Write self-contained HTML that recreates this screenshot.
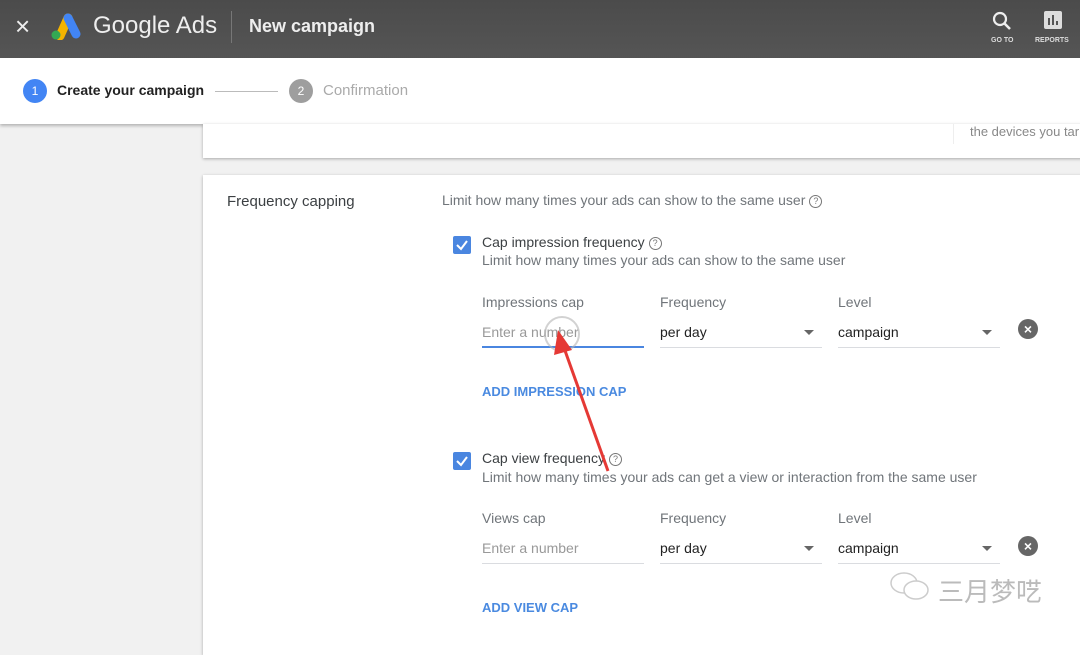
<!DOCTYPE html>
<html><head><meta charset="utf-8"><style>
*{margin:0;padding:0;box-sizing:border-box}
body{width:1080px;height:637px;overflow:hidden;background:#f1f1f1;font-family:"Liberation Sans",Arial,sans-serif;position:relative}
.a{position:absolute}
.hdr{left:0;top:0;width:1080px;height:58px;background:linear-gradient(#4b4b4b,#555)}
.step{left:0;top:58px;width:1080px;height:66px;background:#fff;box-shadow:0 2px 3px rgba(0,0,0,.25)}
.card{background:#fff;box-shadow:0 1px 3px rgba(0,0,0,.3)}
.t{color:#3c4043;font-size:14px}
.g{color:#70757a;font-size:14px}
.lbl{color:#70757a;font-size:14px}
.ul{height:1px;background:#dadce0}
.cb{width:18px;height:18px;background:#4a86e0;border-radius:2px}
.link{color:#4a8ae0;font-size:13px;font-weight:bold}
.x{width:20px;height:20px;border-radius:50%;background:#666;color:#fff;font-size:14px;text-align:center;line-height:20px;font-weight:bold}
.arrow{width:0;height:0;border-left:5px solid transparent;border-right:5px solid transparent;border-top:5px solid #666}
.q{display:inline-block;width:13px;height:13px;border:1.3px solid #777;border-radius:50%;font-size:9px;line-height:11px;text-align:center;color:#777;vertical-align:1px;margin-left:4px}
</style></head><body>
<div class="a hdr"></div>
<div class="a" style="left:15px;top:11px;color:#eee;font-size:26px">×</div>
<svg class="a" style="left:48px;top:12px" width="34" height="28" viewBox="0 0 34 28"><path d="M12 24 L20 6" stroke="#f4b400" stroke-width="9" stroke-linecap="round"/><path d="M20 6 L28 22" stroke="#4285f4" stroke-width="9" stroke-linecap="round"/><circle cx="8" cy="23" r="4.5" fill="#34a853"/></svg>
<div class="a" style="left:93px;top:12px;color:#eee;font-size:24px">Google Ads</div>
<div class="a" style="left:231px;top:11px;width:1px;height:32px;background:#777"></div>
<div class="a" style="left:249px;top:16px;color:#eee;font-size:18px;font-weight:bold">New campaign</div>
<svg class="a" style="left:991px;top:10px" width="22" height="22" viewBox="0 0 22 22"><circle cx="9" cy="9" r="6" stroke="#eee" stroke-width="2.2" fill="none"/><path d="M13 13 L19 19" stroke="#eee" stroke-width="2.6"/></svg>
<div class="a" style="left:991px;top:37px;color:#ddd;font-size:7px;font-weight:bold">GO TO</div>
<div class="a" style="left:1044px;top:11px;width:18px;height:18px;background:#ddd;border-radius:2px"></div>
<div class="a" style="left:1048px;top:18px;width:2px;height:7px;background:#555"></div><div class="a" style="left:1052px;top:15px;width:2px;height:10px;background:#555"></div><div class="a" style="left:1056px;top:21px;width:2px;height:4px;background:#555"></div>
<div class="a" style="left:1035px;top:37px;color:#ddd;font-size:7px;font-weight:bold">REPORTS</div>
<div class="a step"></div>
<div class="a" style="left:23px;top:79px;width:24px;height:24px;border-radius:50%;background:#4285f4;color:#fff;font-size:12px;text-align:center;line-height:24px">1</div>
<div class="a" style="left:57px;top:82px;color:#222;font-size:14px;font-weight:bold">Create your campaign</div>
<div class="a" style="left:215px;top:91px;width:63px;height:1px;background:#bbb"></div>
<div class="a" style="left:289px;top:79px;width:24px;height:24px;border-radius:50%;background:#9e9e9e;color:#fff;font-size:12px;text-align:center;line-height:24px">2</div>
<div class="a" style="left:323px;top:82px;color:#aaa;font-size:15px">Confirmation</div>
<div class="a card" style="left:203px;top:124px;width:890px;height:34px"></div>
<div class="a" style="left:953px;top:124px;width:1px;height:20px;background:#eee"></div>
<div class="a" style="left:970px;top:124px;color:#888;font-size:13px">the devices you tar</div>
<div class="a card" style="left:203px;top:175px;width:890px;height:480px"></div>
<div class="a t" style="left:227px;top:193px;font-size:15px">Frequency capping</div>
<div class="a g" style="left:442px;top:192px">Limit how many times your ads can show to the same user<span class="q">?</span></div>

<div class="a cb" style="left:453px;top:236px"></div>
<svg class="a" style="left:453px;top:236px" width="18" height="18"><path d="M4 9 L8 13 L14 5" stroke="#fff" stroke-width="2" fill="none"/></svg>
<div class="a t" style="left:482px;top:234px">Cap impression frequency<span class="q">?</span></div>
<div class="a g" style="left:482px;top:252px">Limit how many times your ads can show to the same user</div>
<div class="a lbl" style="left:482px;top:294px">Impressions cap</div>
<div class="a lbl" style="left:660px;top:294px">Frequency</div>
<div class="a lbl" style="left:838px;top:294px">Level</div>
<div class="a" style="left:482px;top:324px;color:#999;font-size:14px">Enter a number</div>
<div class="a" style="left:482px;top:346px;width:162px;height:2px;background:#4a86e0"></div>
<div class="a t" style="left:660px;top:324px;color:#222">per day</div>
<div class="a arrow" style="left:804px;top:330px"></div>
<div class="a ul" style="left:660px;top:347px;width:162px"></div>
<div class="a t" style="left:838px;top:324px;color:#222">campaign</div>
<div class="a arrow" style="left:982px;top:330px"></div>
<div class="a ul" style="left:838px;top:347px;width:162px"></div>
<div class="a x" style="left:1018px;top:319px">×</div>
<div class="a link" style="left:482px;top:384px">ADD IMPRESSION CAP</div>
<div class="a" style="left:544px;top:316px;width:36px;height:36px;border-radius:50%;border:2px solid rgba(180,180,180,.6)"></div>

<div class="a cb" style="left:453px;top:452px"></div>
<svg class="a" style="left:453px;top:452px" width="18" height="18"><path d="M4 9 L8 13 L14 5" stroke="#fff" stroke-width="2" fill="none"/></svg>
<div class="a t" style="left:482px;top:450px">Cap view frequency<span class="q">?</span></div>
<div class="a g" style="left:482px;top:469px">Limit how many times your ads can get a view or interaction from the same user</div>
<div class="a lbl" style="left:482px;top:510px">Views cap</div>
<div class="a lbl" style="left:660px;top:510px">Frequency</div>
<div class="a lbl" style="left:838px;top:510px">Level</div>
<div class="a" style="left:482px;top:540px;color:#999;font-size:14px">Enter a number</div>
<div class="a ul" style="left:482px;top:563px;width:162px"></div>
<div class="a t" style="left:660px;top:540px;color:#222">per day</div>
<div class="a arrow" style="left:804px;top:546px"></div>
<div class="a ul" style="left:660px;top:563px;width:162px"></div>
<div class="a t" style="left:838px;top:540px;color:#222">campaign</div>
<div class="a arrow" style="left:982px;top:546px"></div>
<div class="a ul" style="left:838px;top:563px;width:162px"></div>
<div class="a x" style="left:1018px;top:536px">×</div>
<div class="a link" style="left:482px;top:600px">ADD VIEW CAP</div>

<svg class="a" style="left:550px;top:325px" width="70" height="150"><path d="M58 146 L13 20" stroke="#e53935" stroke-width="3"/><path d="M8 5 L4 30 L22 25 Z" fill="#e53935"/></svg>
<svg class="a" style="left:888px;top:570px" width="46" height="34"><ellipse cx="16" cy="13" rx="13" ry="10" fill="none" stroke="#ccc" stroke-width="1.5"/><ellipse cx="28" cy="20" rx="12" ry="9" fill="#fff" stroke="#ccc" stroke-width="1.5"/></svg>
<div class="a" style="left:938px;top:572px;color:#bbb;font-size:26px;font-family:'Liberation Sans','Noto Sans CJK SC',sans-serif">三月梦呓</div>
</body></html>
